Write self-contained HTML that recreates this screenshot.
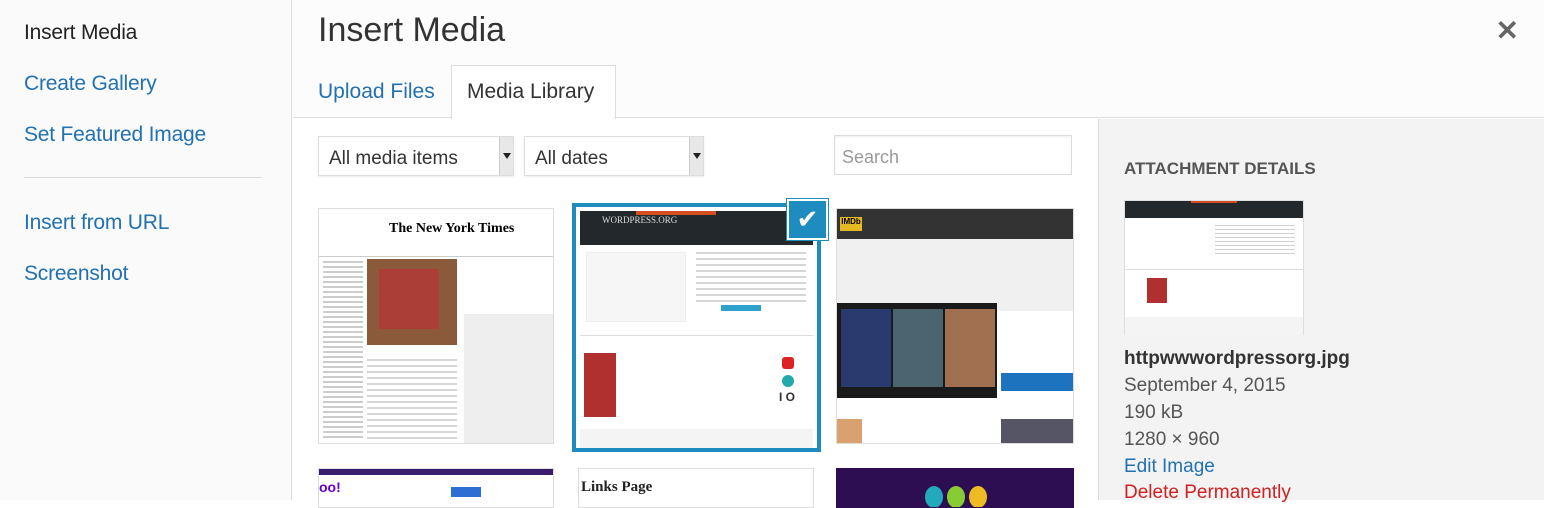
<!DOCTYPE html>
<html><head><meta charset="utf-8"><style>
*{margin:0;padding:0;box-sizing:border-box}
body{width:1544px;height:500px;overflow:hidden;font-family:"Liberation Sans",sans-serif;background:#fff;position:relative}
.abs{position:absolute}
.side{left:0;top:0;width:292px;height:500px;background:#fafafa;border-right:1px solid #ddd}
.side a{position:absolute;left:24px;font-size:21px;color:#2271b1;text-decoration:none;letter-spacing:-0.2px}
.hdr{left:293px;top:0;width:1251px;height:118px;background:#fcfcfc;border-bottom:1px solid #ddd}
.sel{border:1px solid #ddd;background:#fff;font-size:19px;color:#333;padding:11px 10px;height:40px;box-shadow:0 1px 2px rgba(0,0,0,.08)}
.arr{position:absolute;right:0;top:0;width:14px;height:38px;background:#e8e8e8;border-left:1px solid #ccc}
.arr:after{content:"";position:absolute;left:3px;top:16px;border:4px solid transparent;border-top:6px solid #222}
.th{position:absolute;border:1px solid #ddd;background:#fff;overflow:hidden}
.right{left:1098px;top:119px;width:446px;height:381px;background:#f3f3f3;border-left:1px solid #ddd}
.r{position:absolute;left:25px;font-size:19px;color:#555}
</style></head><body>
<div class="abs side">
<a style="top:21px;color:#222;font-weight:normal">Insert Media</a>
<a style="top:72px">Create Gallery</a>
<a style="top:123px">Set Featured Image</a>
<div class="abs" style="left:24px;top:177px;width:238px;height:1px;background:#ddd"></div>
<a style="top:211px">Insert from URL</a>
<a style="top:262px">Screenshot</a>
</div>
<div class="abs hdr">
<div class="abs" style="left:25px;top:11px;font-size:34px;color:#333">Insert Media</div>
<div class="abs" style="left:25px;top:80px;font-size:21px;color:#2271b1">Upload Files</div>
<div class="abs" style="left:158px;top:65px;width:165px;height:54px;background:#fff;border:1px solid #ddd;border-bottom:none;font-size:21px;color:#333;padding:14px 0 0 15px">Media Library</div>
<div class="abs" style="right:25px;top:14px;font-size:28px;color:#666;font-weight:bold">✕</div>
</div>
<div class="abs sel" style="left:318px;top:136px;width:196px"><span>All media items</span><div class="arr"></div></div>
<div class="abs sel" style="left:524px;top:136px;width:180px">All dates<div class="arr"></div></div>
<div class="abs sel" style="left:834px;top:135px;width:238px;color:#999;padding-left:7px;font-size:18px;box-shadow:inset 0 1px 2px rgba(0,0,0,.07)">Search</div>

<div class="th" style="left:318px;top:208px;width:236px;height:236px">
<div class="abs" style="left:70px;top:12px;font-family:'Liberation Serif',serif;font-size:14px;font-weight:bold">The New York Times</div>
<div class="abs" style="left:0;top:40px;width:236px;height:8px;border-bottom:1px solid #ccc"></div>
<div class="abs" style="left:48px;top:50px;width:90px;height:86px;background:#8a5a3a"></div>
<div class="abs" style="left:60px;top:60px;width:60px;height:60px;background:#c23;opacity:.5"></div>
<div class="abs" style="left:145px;top:105px;width:91px;height:131px;background:#eee"></div>
<div class="abs" style="left:4px;top:52px;width:40px;height:180px;background:repeating-linear-gradient(#999 0 2px,#fff 2px 5px);opacity:.5"></div>
<div class="abs" style="left:48px;top:150px;width:90px;height:80px;background:repeating-linear-gradient(#999 0 2px,#fff 2px 6px);opacity:.4"></div>
</div>
<div class="abs" style="left:572px;top:203px;width:249px;height:249px;border:4px solid #1e8cbe;background:#fff">
<div class="abs" style="left:4px;top:4px;width:233px;height:34px;background:#23282d"></div>
<div class="abs" style="left:60px;top:4px;width:80px;height:4px;background:#d54e21"></div>
<div class="abs" style="left:26px;top:8px;font-family:'Liberation Serif',serif;font-size:9px;color:#ddd">WORDPRESS.ORG</div>
<div class="abs" style="left:10px;top:45px;width:100px;height:70px;background:#f6f6f6;border:1px solid #eee"></div>
<div class="abs" style="left:120px;top:45px;width:110px;height:50px;background:repeating-linear-gradient(#bbb 0 2px,#fff 2px 6px);opacity:.6"></div>
<div class="abs" style="left:145px;top:98px;width:40px;height:6px;background:#2ea2cc"></div>
<div class="abs" style="left:4px;top:128px;width:233px;height:1px;background:#ddd"></div>
<div class="abs" style="left:8px;top:146px;width:32px;height:64px;background:#b03030"></div>
<div class="abs" style="left:206px;top:150px;width:12px;height:12px;background:#d22;border-radius:3px"></div>
<div class="abs" style="left:206px;top:168px;width:12px;height:12px;background:#2aa;border-radius:50%"></div>
<div class="abs" style="left:203px;top:183px;font-size:12px;font-weight:bold;color:#333">I O</div>
<div class="abs" style="left:4px;top:222px;width:233px;height:19px;background:#f4f4f4"></div>
<div class="abs" style="left:211px;top:-8px;width:41px;height:41px;background:#1e8cbe;border:2px solid #fff;box-shadow:0 0 0 1px #1e8cbe;color:#fff;font-size:26px;text-align:center;line-height:36px">✔</div>
</div>
<div class="th" style="left:836px;top:208px;width:238px;height:236px">
<div class="abs" style="left:0;top:0;width:238px;height:30px;background:#333"></div>
<div class="abs" style="left:3px;top:8px;width:22px;height:14px;background:#e5b922;font-size:8px;font-weight:bold;text-align:center">IMDb</div>
<div class="abs" style="left:0;top:30px;width:238px;height:72px;background:#f0f0f0"></div>
<div class="abs" style="left:0;top:94px;width:160px;height:95px;background:#1a1a1a"></div>
<div class="abs" style="left:4px;top:100px;width:50px;height:78px;background:#2b3a6e"></div>
<div class="abs" style="left:56px;top:100px;width:50px;height:78px;background:#4a6470"></div>
<div class="abs" style="left:108px;top:100px;width:50px;height:78px;background:#a07050"></div>
<div class="abs" style="left:164px;top:164px;width:72px;height:18px;background:#1e73be"></div>
<div class="abs" style="left:164px;top:210px;width:72px;height:26px;background:#556"></div>
<div class="abs" style="left:0;top:210px;width:25px;height:26px;background:#d9a070"></div>
</div>
<div class="th" style="left:318px;top:468px;width:236px;height:40px"><div class="abs" style="left:0;top:0;width:236px;height:6px;background:#3b1d6e"></div><div class="abs" style="left:0;top:10px;color:#60c;font-size:14px;font-weight:bold">oo!</div><div class="abs" style="left:132px;top:18px;width:30px;height:10px;background:#2d6ed2"></div></div>
<div class="th" style="left:578px;top:468px;width:236px;height:40px"><div class="abs" style="left:2px;top:10px;font-family:'Liberation Serif',serif;font-size:15px;font-weight:bold;color:#222">Links Page</div></div>
<div class="th" style="left:836px;top:468px;width:238px;height:40px;background:#2e0e52;border-color:#2e0e52"><div class="abs" style="left:88px;top:17px;width:18px;height:22px;border-radius:50%;background:#2ab"></div><div class="abs" style="left:110px;top:17px;width:18px;height:22px;border-radius:50%;background:#8c3"></div><div class="abs" style="left:132px;top:17px;width:18px;height:22px;border-radius:50%;background:#eb2"></div></div>

<div class="abs right">
<div class="r" style="top:40px;font-size:17px;font-weight:bold;color:#555">ATTACHMENT DETAILS</div>
<div class="abs" style="left:25px;top:81px;width:180px;height:135px;background:#fff;border:1px solid #ddd">
<div class="abs" style="left:0;top:0;width:178px;height:17px;background:#23282d"></div>
<div class="abs" style="left:66px;top:0;width:46px;height:2px;background:#d54e21"></div>
<div class="abs" style="left:90px;top:24px;width:80px;height:30px;background:repeating-linear-gradient(#bbb 0 1px,#fff 1px 4px);opacity:.7"></div>
<div class="abs" style="left:0;top:68px;width:178px;height:1px;background:#ddd"></div>
<div class="abs" style="left:22px;top:77px;width:20px;height:25px;background:#b03030"></div>
<div class="abs" style="left:0;top:116px;width:178px;height:18px;background:#f4f4f4"></div>
</div>
<div class="r" style="top:229px;font-weight:bold;color:#333">httpwwwordpressorg.jpg</div>
<div class="r" style="top:256px">September 4, 2015</div>
<div class="r" style="top:283px">190 kB</div>
<div class="r" style="top:310px">1280 × 960</div>
<div class="r" style="top:337px;color:#2271b1">Edit Image</div>
<div class="r" style="top:363px;color:#d02020">Delete Permanently</div>
</div>
</body></html>
